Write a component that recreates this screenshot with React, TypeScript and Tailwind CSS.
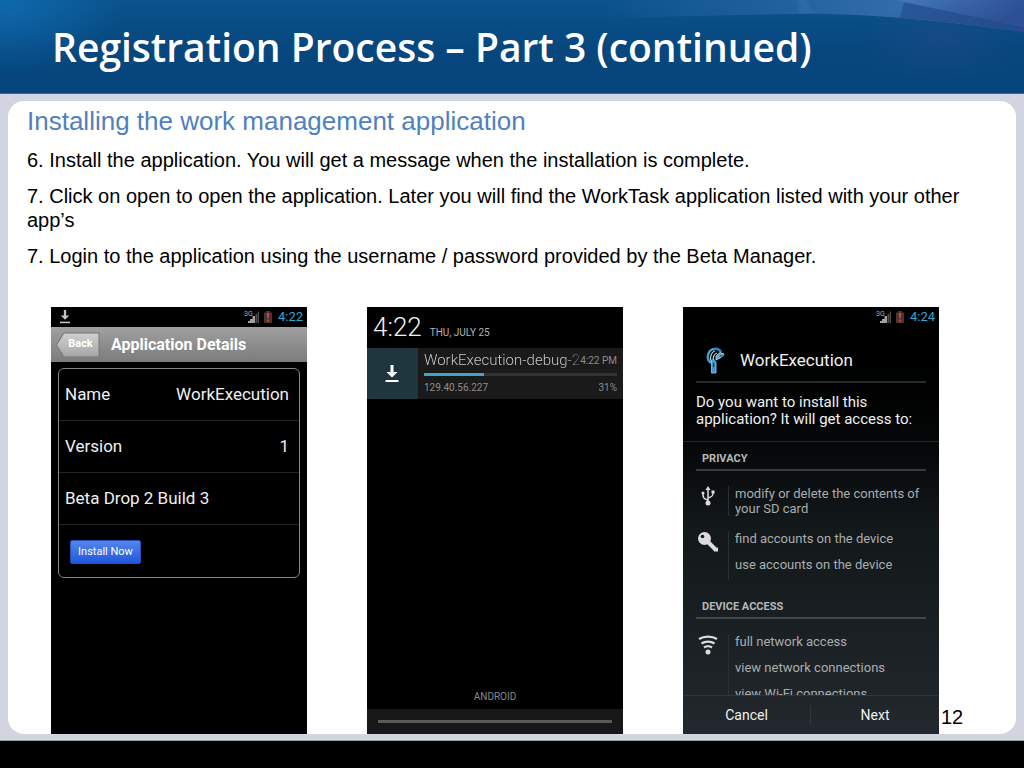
import type { ReactNode } from "react"

function HeaderArt() {
  return (
    <svg className="absolute inset-0 h-full w-full" viewBox="0 0 1024 94" preserveAspectRatio="none" aria-hidden="true">
      <defs>
        <radialGradient id="glow" gradientUnits="userSpaceOnUse" cx="0" cy="0" r="125" gradientTransform="scale(1 0.6)">
          <stop offset="0" stopColor="#0e69ae" />
          <stop offset="1" stopColor="#0e69ae" stopOpacity="0" />
        </radialGradient>
        <linearGradient id="sweep" x1="0" x2="1" y1="0" y2="0">
          <stop offset="0" stopColor="#2f6ba8" stopOpacity="0" />
          <stop offset="0.4" stopColor="#2b68a5" stopOpacity="0.65" />
          <stop offset="0.75" stopColor="#3770ae" />
          <stop offset="1" stopColor="#305a9c" />
        </linearGradient>
        <linearGradient id="corner" x1="0" x2="1" y1="0" y2="0.3">
          <stop offset="0" stopColor="#457ab9" />
          <stop offset="1" stopColor="#2d4f95" />
        </linearGradient>
        <linearGradient id="wedge" x1="0" x2="1" y1="0" y2="0">
          <stop offset="0" stopColor="#28589a" />
          <stop offset="1" stopColor="#264a8c" />
        </linearGradient>
        <radialGradient id="shade">
          <stop offset="0" stopColor="#264a8a" stopOpacity="0.45" />
          <stop offset="1" stopColor="#264a8a" stopOpacity="0" />
        </radialGradient>
      </defs>
      <rect width="190" height="94" fill="url(#glow)" />
      <path d="M600 0 H1024 V32 C960 24 890 15 820 14 C740 14 660 18 600 18 Z" fill="url(#sweep)" />
      <path d="M796 0 L806 0 L814 13 L800 14 Z" fill="#4479b3" opacity="0.25" />
      <path d="M904 2 L1024 27 V32 C980 26 940 21 900 18 Z" fill="url(#wedge)" />
      <path d="M896 0 H1024 V27 L904 2 Z" fill="url(#corner)" />
      <ellipse cx="940" cy="42" rx="84" ry="40" fill="url(#shade)" />
    </svg>
  )
}

function DownloadIcon({ className }: { className: string }) {
  return (
    <svg className={className} viewBox="0 0 14 18" fill="currentColor" aria-hidden="true">
      <path d="M5.5 0 h3 v7 h4 L7 12.5 L1.500 7 h4 Z" />
      <path d="M0.500 15 h13 v2 h-13 Z" />
    </svg>
  )
}

function StatusIcons() {
  return (
    <svg className="h-4 w-7" viewBox="0 0 28 16" aria-hidden="true">
      <text x="0" y="7" fontSize="7" fill="#b0b0b0" fontFamily="Roboto, sans-serif">3G</text>
      <path d="M4 14 v-2 h2 v2 Z M6 14 v-4 h2.500 v4 Z M8.500 14 V7 h2.500 v7 Z" fill="#a0a0a0" />
      <path d="M11.500 14 V5 h1.500 v9 Z M13.500 14 V2.500 h1.500 V14 Z" fill="#4f4f4f" />
      <path d="M20 3.500 h2 v-1.500 h4 v1.500 h2 V14 h-8 Z" fill="#4a3535" />
      <path d="M22.800 4 h2.400 l-0.500 5 h-1.400 Z M23 10.500 h2 v2 h-2 Z" fill="#f03a30" />
    </svg>
  )
}

function StatusBar({ time, downloading }: { time: string; downloading?: boolean }) {
  return (
    <div className="flex h-5 items-center pl-2 pr-1 text-[#35a5d2]">
      {downloading && <DownloadIcon className="h-3.5 w-3 text-[#c4c4c4]" />}
      <div className="ml-auto flex items-center gap-1.5">
        <StatusIcons />
        <span className="text-[13px]">{time}</span>
      </div>
    </div>
  )
}

function Phone({ children, className = "bg-black" }: { children: ReactNode; className?: string }) {
  return (
    <section className={`flex h-[427px] w-64 shrink-0 flex-col overflow-hidden font-[Roboto,sans-serif] text-[#f0f0f0] ${className}`}>
      {children}
    </section>
  )
}

function DetailsPhone() {
  return (
    <Phone>
      <StatusBar time="4:22" downloading />
      <div className="flex h-[35px] items-center gap-[11px] bg-linear-to-b from-[#a0a0a0] to-[#7c7c7c] pl-1">
        <button type="button" className="relative h-[26px] w-[45px] pl-1.5 text-[11px] font-bold text-white">
          <svg className="absolute inset-0 h-full w-full" viewBox="0 0 45 26" aria-hidden="true">
            <defs>
              <linearGradient id="back" x1="0" x2="0" y1="0" y2="1">
                <stop offset="0" stopColor="#d0d0d0" />
                <stop offset="1" stopColor="#a6a6a6" />
              </linearGradient>
            </defs>
            <path d="M9 1 H44 V25 H9 L1.500 13 Z" fill="url(#back)" stroke="#767676" />
          </svg>
          <span className="relative">Back</span>
        </button>
        <h3 className="text-base font-bold text-white">Application Details</h3>
      </div>
      <div className="mx-[7px] mt-1.5 divide-y divide-[#242424] rounded-md border border-[#858585] text-[17px]">
        <div className="flex h-[52px] items-center justify-between pl-1.5 pr-2.5">
          <span>Name</span>
          <span>WorkExecution</span>
        </div>
        <div className="flex h-[52px] items-center justify-between pl-1.5 pr-2.5">
          <span>Version</span>
          <span>1</span>
        </div>
        <div className="flex h-[52px] items-center pl-1.5">Beta Drop 2 Build 3</div>
        <div className="flex h-[52px] items-center pl-[11px] pt-0.5">
          <button type="button" className="h-6 w-[71px] rounded-xs border border-[#2450b4] bg-linear-to-b from-[#5585ea] to-[#1f57dc] text-[11px] text-white">
            Install Now
          </button>
        </div>
      </div>
    </Phone>
  )
}

function DownloadPhone() {
  return (
    <Phone>
      <div className="flex h-[41px] items-baseline gap-2 pl-1.5">
        <span className="text-[26px] font-light leading-10">4:22</span>
        <span className="text-[10px] text-[#b5b5b5]">THU, JULY 25</span>
      </div>
      <div className="flex h-[51px] bg-[#1a1a1a]">
        <div className="flex w-[51px] items-center justify-center bg-[#1f363f]">
          <DownloadIcon className="h-[18px] w-3.5 text-white" />
        </div>
        <div className="flex-1 px-1.5">
          <div className="flex h-[25px] items-center justify-between">
            <span className="whitespace-nowrap bg-linear-to-r from-[#d0d0d0] from-90% to-[#4a4a4a] bg-clip-text text-[15px] font-light text-transparent">
              WorkExecution-debug-2
            </span>
            <span className="whitespace-nowrap text-[10px] text-[#8c8c8c]">4:22 PM</span>
          </div>
          <div className="h-[3px] bg-[#333]" role="progressbar" aria-label="Download" aria-valuenow={31}>
            <div className="h-[3px] bg-[#3aa5cf]" style={{ width: "31%" }} />
          </div>
          <div className="flex h-[23px] items-center justify-between text-[10px] text-[#8c8c8c]">
            <span>129.40.56.227</span>
            <span>31%</span>
          </div>
        </div>
      </div>
      <p className="mt-auto pb-[5px] text-center text-[10px] text-[#8a8a8a]">ANDROID</p>
      <div className="flex h-[25px] items-center bg-[#171717] px-[11px]">
        <div className="h-[3px] w-full bg-[#5a5a5a]" />
      </div>
    </Phone>
  )
}

function AppLogo() {
  return (
    <svg className="h-7 w-5" viewBox="0 0 20 28" fill="none" aria-hidden="true">
      <path d="M5 16 C0 13 1 3 8 2 C11 1 14 3 15 5" stroke="#2b87bd" strokeWidth="2.500" />
      <path d="M6 15 C3 12 5 5 9 4 M8 14 C6 11 8 7 11 6" stroke="#a8d3e8" strokeWidth="1.200" />
      <path d="M5 16 C0 13 1 3 8 2" stroke="#8fc4df" strokeWidth="0.700" />
      <path d="M10 9 L14 5.500 L18 7 L17 9 L14 11 L10 13 Z" fill="#54a4ce" stroke="#c3e1ee" strokeWidth="0.800" />
      <path d="M14 9 H18" stroke="#173c50" strokeWidth="1" />
      <path d="M5.500 13 C8 12 10 14 10 16 V26 H5.500 Z" fill="#2f9ad8" stroke="#9acbe3" strokeWidth="0.800" />
      <path d="M7.700 16 V20" stroke="#12384f" strokeWidth="1.200" />
    </svg>
  )
}

function UsbIcon() {
  return (
    <svg className="h-5 w-3.5" viewBox="0 0 14 20" fill="none" stroke="#dcdcdc" strokeWidth="1.500" aria-hidden="true">
      <path d="M7 3 V17 M7 14 C3 13 2 12 2 8 M7 12 C11 11 12 10 12 7" />
      <path d="M7 0 L9.500 4 H4.500 Z" fill="#dcdcdc" stroke="none" />
      <circle cx="7" cy="17" r="2.500" fill="#dcdcdc" stroke="none" />
      <circle cx="2" cy="7" r="1.500" fill="#dcdcdc" stroke="none" />
      <path d="M10.500 4.500 h3 v3 h-3 Z" fill="#dcdcdc" stroke="none" />
    </svg>
  )
}

function KeyIcon() {
  return (
    <svg className="h-[22px] w-[22px]" viewBox="0 0 22 22" aria-hidden="true">
      <path d="M10 10 L19 19" stroke="#dcdcdc" strokeWidth="4" />
      <path d="M17 20.500 L21 20.500 V16 Z" fill="#dcdcdc" />
      <circle cx="7.500" cy="7.500" r="6.500" fill="#dcdcdc" />
      <circle cx="5.500" cy="5.500" r="1.800" fill="#14191b" />
    </svg>
  )
}

function WifiIcon() {
  return (
    <svg className="h-[22px] w-5" viewBox="0 0 20 22" fill="none" stroke="#dcdcdc" strokeWidth="2.200" aria-hidden="true">
      <path d="M1 5 C6 1.800 14 1.800 19 5" />
      <path d="M3.500 9.500 C7 7 13 7 16.500 9.500" />
      <path d="M6 13.500 C8.500 11.800 11.500 11.800 14 13.500" />
      <circle cx="10" cy="18" r="2.500" fill="#dcdcdc" stroke="none" />
    </svg>
  )
}

function Permission({ icon, children }: { icon: ReactNode; children: ReactNode }) {
  return (
    <div className="flex">
      <div className="flex w-6 shrink-0 justify-center">{icon}</div>
      <ul className="ml-2 flex flex-col gap-[11px] border-l border-[#2a2f31] pl-1.5 text-[13px] leading-[15px] text-[#a9adae]">
        {children}
      </ul>
    </div>
  )
}

function PermissionsPhone() {
  return (
    <Phone className="bg-linear-to-b from-black via-[#121719] to-[#22282d]">
      <StatusBar time="4:24" />
      <div className="mx-[13px] flex h-14 items-center gap-3.5 border-b-2 border-[#262b2b] pl-2.5 pt-3.5">
        <AppLogo />
        <h3 className="text-[17px]">WorkExecution</h3>
      </div>
      <p className="border-b border-[#202527] pb-[13px] pl-[13px] pr-6 pt-[11px] text-[15px] leading-[17px]">
        Do you want to install this application? It will get access to:
      </p>
      <div className="flex-1 overflow-hidden px-[13px]">
        <h4 className="h-[29px] border-b-2 border-[#373c3e] pl-1.5 pt-[9px] text-[11px] font-bold text-[#b4b8b9]">PRIVACY</h4>
        <div className="flex h-[119px] flex-col gap-[15px] pt-[15px]">
          <Permission icon={<UsbIcon />}>
            <li>modify or delete the contents of your SD card</li>
          </Permission>
          <Permission icon={<KeyIcon />}>
            <li>find accounts on the device</li>
            <li className="pb-2">use accounts on the device</li>
          </Permission>
        </div>
        <h4 className="h-[29px] border-b-2 border-[#43494b] pl-1.5 pt-[9px] text-[11px] font-bold text-[#b4b8b9]">DEVICE ACCESS</h4>
        <div className="pt-[15px]">
          <Permission icon={<WifiIcon />}>
            <li>full network access</li>
            <li>view network connections</li>
            <li>view Wi-Fi connections</li>
          </Permission>
        </div>
      </div>
      <div className="flex h-[39px] items-center border-t border-[#30363a] text-sm">
        <button type="button" className="h-5 w-1/2 border-r border-[#2f353a]">Cancel</button>
        <button type="button" className="h-5 w-1/2">Next</button>
      </div>
    </Phone>
  )
}

function App() {
  return (
    <div className="min-h-screen bg-black font-['Liberation_Sans',sans-serif] text-black">
      <header className="relative flex h-[94px] items-center border-b border-[#3c6590] bg-linear-to-b from-[#0b538d] via-[#07477e] to-[#06457c] pl-[52px]">
        <HeaderArt />
        <h1 className="relative whitespace-nowrap pt-0.5 font-['Open_Sans',sans-serif] text-[39px] font-semibold text-white">
          Registration Process – Part 3 (continued)
        </h1>
      </header>
      <div className="border-b border-[#9a9ca6] bg-[#d2d5e0] px-2 pb-1.5 pt-[7px]">
        <main className="rounded-2xl bg-white">
          <div className="px-[19px] pt-1 text-xl leading-6">
            <h2 className="text-[26px] leading-8 text-[#4f81bd]">Installing the work management application</h2>
            <div className="flex flex-col gap-3 pt-[11px]">
              <p>6. Install the application. You will get a message when the installation is complete.</p>
              <p>7. Click on open to open the application. Later you will find the WorkTask application listed with your other app’s</p>
              <p>7. Login to the application using the username / password provided by the Beta Manager.</p>
            </div>
          </div>
          <div className="flex gap-[60px] pl-[43px] pt-[39px]">
            <DetailsPhone />
            <DownloadPhone />
            <div className="flex items-end gap-0.5">
              <PermissionsPhone />
              <span className="pb-[3px] text-xl">12</span>
            </div>
          </div>
        </main>
      </div>
    </div>
  )
}

export default App
